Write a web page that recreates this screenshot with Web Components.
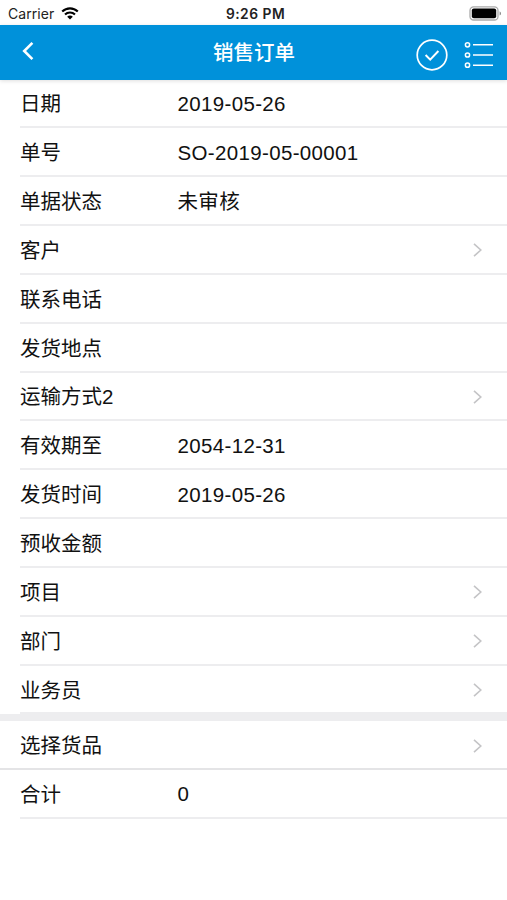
<!DOCTYPE html>
<html lang="zh-CN">
<head>
<meta charset="utf-8">
<title>销售订单</title>
<style>
  body {
    margin: 0;
    background-color: #fff;
    color: #111;
    font-family: "Liberation Sans", "Noto Sans CJK SC", sans-serif;
  }
</style>
</head>
<body>
<order-page></order-page>

<script>
class StatusBar extends HTMLElement {
  constructor() {
    super();
    this.attachShadow({ mode: "open" });
  }

  static get styles() {
    return /* css */`
      :host {
        display: grid;
        grid-template-columns: 1fr auto 1fr;
        align-items: center;
        box-sizing: border-box;
        height: 25px;
        padding: 2px 5px 0 8px;
        font: 14.5px/20px Inter, sans-serif;
        color: #222;
      }

      .carrier {
        display: flex;
        align-items: center;
        gap: 7px;
      }

      .carrier span {
        letter-spacing: 0.05px;
        font-size: 14px;
      }

      .time {
        padding-left: 1px;
        font-size: 13.8px;
        font-weight: 600;
        letter-spacing: 0.5px;
      }

      svg {
        display: block;
      }

      .battery {
        justify-self: end;
      }
    `;
  }

  connectedCallback() {
    this.render();
  }

  render() {
    this.shadowRoot.innerHTML = /* html */`
    <style>${StatusBar.styles}</style>
    <div class="carrier">
      <span>Carrier</span>
      <svg width="18" height="13" viewBox="0 0 18 13" fill="none" stroke="#000" stroke-width="2.1">
        <path d="M1.2 4.6C5.6 .3 12.4 .3 16.8 4.6"/>
        <path d="M4 7.6C6.8 4.8 11.2 4.8 14 7.6"/>
        <path d="M6.2 9.7C7.8 8.1 10.2 8.1 11.8 9.7L9 12.5Z" fill="#000" stroke="none"/>
      </svg>
    </div>
    <div class="time">9:26 PM</div>
    <svg class="battery" width="33" height="15" viewBox="0 0 33 15">
      <rect x="1" y=".8" width="28" height="13.2" rx="3.6" fill="#fff" stroke="#aaa" stroke-width="1.3"/>
      <rect x="2.8" y="2.6" width="24.4" height="9.6" rx="2" fill="#000"/>
      <path d="M30.6 5.2C32.5 6 32.5 8.8 30.6 9.6Z" fill="#888"/>
    </svg>`;
  }
}

class NavBar extends HTMLElement {
  constructor() {
    super();
    this.attachShadow({ mode: "open" });
  }

  static get styles() {
    return /* css */`
      :host {
        display: grid;
        grid-template-columns: 1fr auto 1fr;
        align-items: center;
        box-sizing: border-box;
        height: 54.5px;
        padding: 0 13px 0 20px;
        background-color: #0091da;
        box-shadow: 0 1px 4px #0002;
        color: #fff;
      }

      h1 {
        margin: 0;
        padding: 2px 6px 0 0;
        font-size: 20.5px;
        line-height: 30px;
        font-weight: 500;
      }

      svg {
        display: block;
        fill: none;
        stroke: #fff;
      }

      .back {
        margin-bottom: 3px;
      }

      .actions {
        display: flex;
        justify-content: flex-end;
        align-items: center;
        gap: 16px;
        padding-top: 5px;
      }
    `;
  }

  connectedCallback() {
    this.render();
  }

  render() {
    this.shadowRoot.innerHTML = /* html */`
    <style>${NavBar.styles}</style>
    <svg class="back" width="16" height="20" viewBox="0 0 16 20" stroke-width="2.6">
      <path d="M12.4 1.8L4.2 10L12.4 18.2"/>
    </svg>
    <h1><slot></slot></h1>
    <div class="actions">
      <svg width="32" height="32" viewBox="0 0 32 32" stroke-width="1.7">
        <circle cx="16" cy="16" r="14.8"/>
        <path d="M9.6 16L14.2 20.6L22.4 12" stroke-width="2"/>
      </svg>
      <svg width="30" height="28" viewBox="0 0 30 28" stroke-width="1.5">
        <circle cx="3.5" cy="3.8" r="2.1"/>
        <circle cx="3.5" cy="14" r="2.1"/>
        <circle cx="3.5" cy="24.2" r="2.1"/>
        <path d="M9 3.8H29M9 14H29M9 24.2H29" stroke-width="1.6"/>
      </svg>
    </div>`;
  }
}

class FormRow extends HTMLElement {
  constructor() {
    super();
    this.attachShadow({ mode: "open" });
  }

  static get styles() {
    return /* css */`
      :host {
        display: block;
        padding-left: 20px;
        font-size: 20.5px;
        line-height: 30px;
      }

      :host([full]) {
        padding-left: 0;
      }

      :host([full]) .row {
        padding-left: 20px;
      }

      .row {
        display: flex;
        align-items: center;
        box-sizing: border-box;
        height: 48.85px;
        padding: 2px 23px 0 0;
        border-bottom: 2px solid var(--line-color, #ededef);
      }

      .label {
        flex: 0 0 157.5px;
        padding-top: 1px;
      }

      .value {
        flex: 1;
        letter-spacing: 0.35px;
      }

      svg {
        display: block;
        fill: none;
        stroke: #c4c4c6;
        stroke-width: 1.6;
      }
    `;
  }

  connectedCallback() {
    this.render();
  }

  genArrow() {
    return this.hasAttribute("arrow")
      ? /* html */`<svg width="12" height="16" viewBox="0 0 12 16"><path d="M2 1.8L8.8 8L2 14.2"/></svg>`
      : "";
  }

  render() {
    this.shadowRoot.innerHTML = /* html */`
    <style>${FormRow.styles}</style>
    <div class="row">
      <div class="label">${this.getAttribute("label")}</div>
      <div class="value"><slot></slot></div>
      ${this.genArrow()}
    </div>`;
  }
}

class OrderPage extends HTMLElement {
  constructor() {
    super();
    this.attachShadow({ mode: "open" });
  }

  static get styles() {
    return /* css */`
      :host {
        display: block;
        height: 900px;
        overflow: hidden;
      }

      nav-bar {
        position: relative;
      }

      .gap {
        height: 7px;
        background-color: #ededef;
      }

      .pick {
        --line-color: #e4e4e6;
        margin-bottom: -0.6px;
      }
    `;
  }

  connectedCallback() {
    this.render();
  }

  render() {
    this.shadowRoot.innerHTML = /* html */`
    <style>${OrderPage.styles}</style>
    <status-bar></status-bar>
    <nav-bar>销售订单</nav-bar>
    <form-row label="日期">2019-05-26</form-row>
    <form-row label="单号">SO-2019-05-00001</form-row>
    <form-row label="单据状态">未审核</form-row>
    <form-row label="客户" arrow></form-row>
    <form-row label="联系电话"></form-row>
    <form-row label="发货地点"></form-row>
    <form-row label="运输方式2" arrow></form-row>
    <form-row label="有效期至">2054-12-31</form-row>
    <form-row label="发货时间">2019-05-26</form-row>
    <form-row label="预收金额"></form-row>
    <form-row label="项目" arrow></form-row>
    <form-row label="部门" arrow></form-row>
    <form-row label="业务员" arrow></form-row>
    <div class="gap"></div>
    <form-row class="pick" label="选择货品" arrow full></form-row>
    <form-row label="合计">0</form-row>`;
  }
}

customElements.define("status-bar", StatusBar);
customElements.define("nav-bar", NavBar);
customElements.define("form-row", FormRow);
customElements.define("order-page", OrderPage);
</script>
</body>
</html>
